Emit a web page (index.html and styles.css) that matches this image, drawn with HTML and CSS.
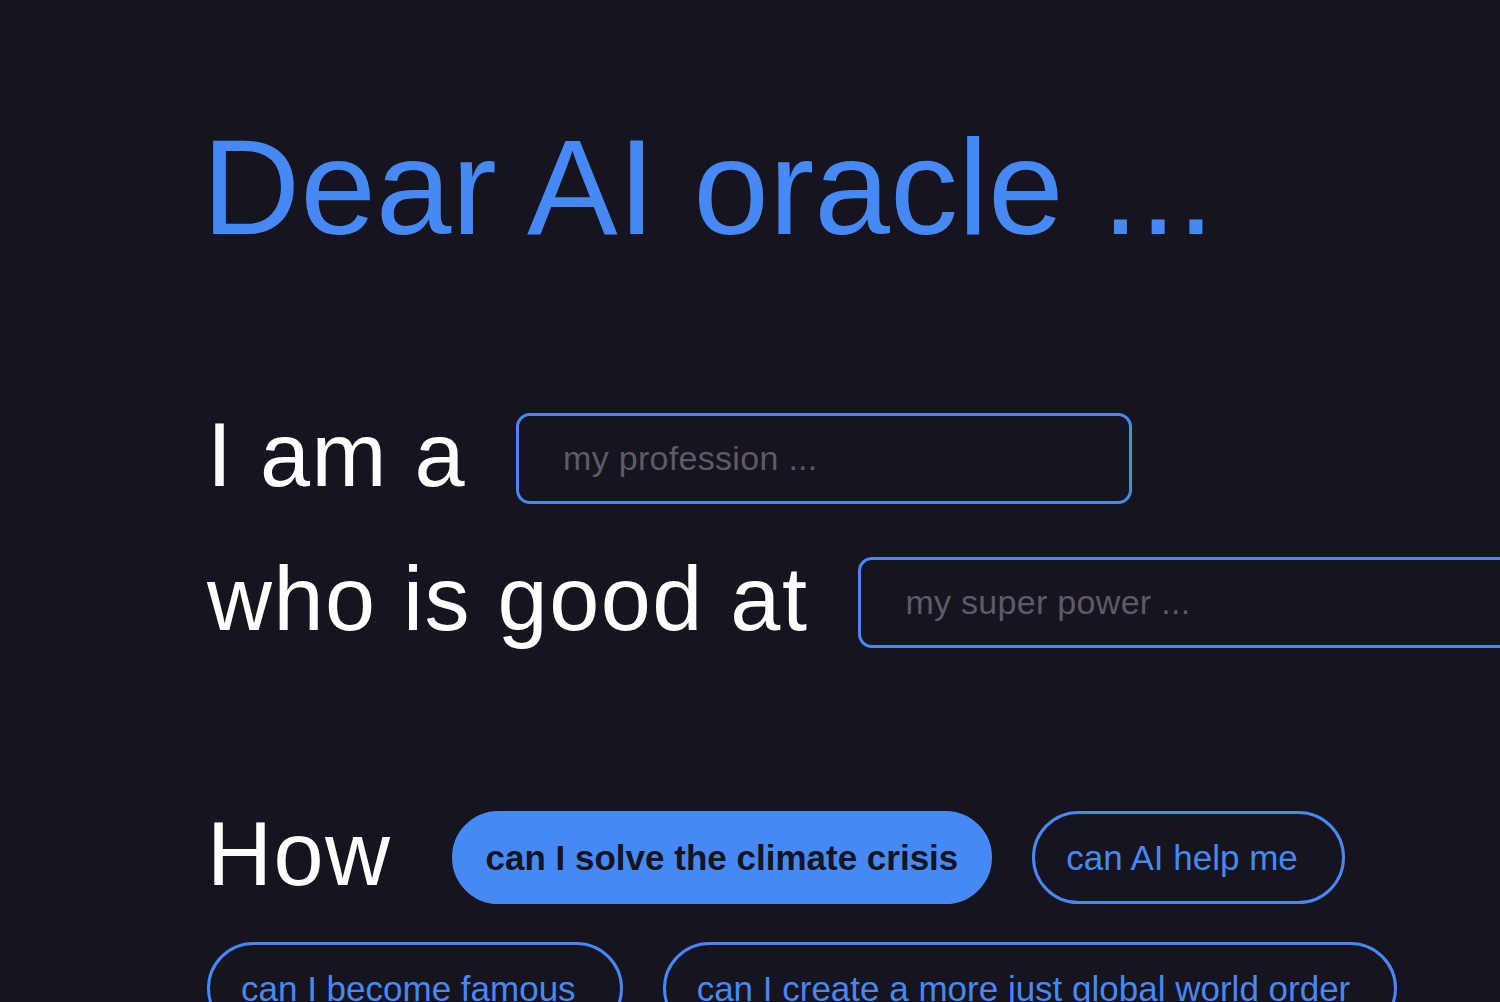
FILE: index.html
```html
<!DOCTYPE html>
<html lang="en">
<head>
  <meta charset="UTF-8" />
  <meta name="viewport" content="width=device-width, initial-scale=1.0"/>
  <title>Dear AI oracle</title>
  <link rel="stylesheet" href="styles.css">
</head>
<body>
<main class="oracle">
  <h1 class="title">Dear AI oracle ...</h1>
  <form class="intro" onsubmit="return false">
    <label class="line">
      <span class="lead">I am a</span>
      <input class="field field-short" type="text" placeholder="my profession ...">
    </label>
    <label class="line">
      <span class="lead">who is good at</span>
      <input class="field field-long" type="text" placeholder="my super power ...">
    </label>
  </form>
  <section class="questions">
    <span class="lead">How</span>
    <button class="chip active">can I solve the climate crisis</button>
    <button class="chip">can AI help me</button>
    <button class="chip">can I become famous</button>
    <button class="chip">can I create a more just global world order</button>
  </section>
</main>
<script>
  document.querySelectorAll(".chip").forEach(chip => {
    chip.addEventListener("click", () => {
      document.querySelectorAll(".chip").forEach(c => c.classList.remove("active"));
      chip.classList.add("active");
    });
  });
</script>
</body>
</html>
```

FILE: styles.css
```css
:root {
  --bg: #15141f;
  --blue: #4689f5;
  --muted: #5c5b66;
  --text: #ffffff;
}
html, body {
  margin: 0;
  height: 100%;
  overflow: hidden;
}
body {
  background: var(--bg);
  color: var(--text);
  font-family: "Liberation Sans", Arial, sans-serif;
}
.oracle {
  padding: 119px 0 0 207px;
}
.title {
  margin: 0 0 158px -5px;
  font-size: 136px;
  font-weight: normal;
  line-height: 1;
  color: var(--blue);
  white-space: nowrap;
}
.intro {
  display: flex;
  flex-direction: column;
  gap: 53px;
}
.line {
  display: flex;
  align-items: center;
  gap: 50px;
}
/* big white words; nudged up a little so they sit on the field's centre */
.lead {
  margin-top: -8px;
  font-size: 90px;
  line-height: 1;
  letter-spacing: 1.5px;
  white-space: nowrap;
}
.field {
  box-sizing: border-box;
  height: 91px;
  padding: 0 44px;
  border: 3px solid var(--blue);
  border-radius: 14px;
  background: transparent;
  color: var(--text);
  font-family: inherit;
  font-size: 34px;
  letter-spacing: 0.3px;
  outline: none;
}
.field::placeholder { color: var(--muted); }
.field-short { width: 616px; }
.field-long { width: 720px; flex-shrink: 0; }
.questions {
  display: flex;
  flex-wrap: wrap;
  align-items: center;
  column-gap: 40px;
  row-gap: 38px;
  margin-top: 163px;
}
.questions .lead { margin-right: 20px; }
.chip {
  height: 93px;
  padding: 0 44px 0 31px;
  border: 3px solid var(--blue);
  border-radius: 47px;
  background: transparent;
  color: var(--blue);
  font-family: inherit;
  font-size: 35px;
  cursor: pointer;
}
.chip.active {
  padding-right: 31px;
  background: var(--blue);
  color: var(--bg);
  font-weight: bold;
}
```
